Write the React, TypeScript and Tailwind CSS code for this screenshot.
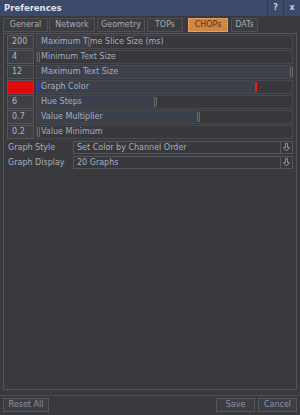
const tabs = [
  { name: 'General', w: 'w-[45px]' },
  { name: 'Network', w: 'ml-[1px] w-[46px]' },
  { name: 'Geometry', w: 'ml-[2px] w-[48px]' },
  { name: 'TOPs', w: 'ml-[2px] w-[36px]' },
  { name: 'CHOPs', w: 'ml-[5px] w-[40px]' },
  { name: 'DATs', w: 'ml-[3px] w-[27px]' },
];

type Row = { value: string; label: string; fill: number; color?: boolean };

// fill = slider thumb position in px from the left of the field
const rows: Row[] = [
  { value: '200', label: 'Maximum Time Slice Size (ms)', fill: 52 },
  { value: '4', label: 'Minimum Text Size', fill: 0 },
  { value: '12', label: 'Maximum Text Size', fill: 254 },
  { value: '', label: 'Graph Color', fill: 218, color: true },
  { value: '6', label: 'Hue Steps', fill: 118 },
  { value: '0.7', label: 'Value Multiplier', fill: 161 },
  { value: '0.2', label: 'Value Minimum', fill: 0 },
];

const menus = [
  { label: 'Graph Style', value: 'Set Color by Channel Order' },
  { label: 'Graph Display', value: '20 Graphs' },
];

function SliderRow({ row }: { row: Row }) {
  return (
    <div className="flex h-[14px] items-stretch gap-[2px]">
      {row.color ? (
        <div className="w-[27px] border border-[#55565b] bg-[#e00a0a]" />
      ) : (
        <div className="w-[27px] border border-[#55565b] bg-[#3f4045] pl-[4px] leading-[12px] text-[#b3b7c0]">
          {row.value}
        </div>
      )}
      <div className="relative flex-1 border border-[#48494d] bg-[#39393d]">
        <div
          className="absolute left-0 top-0 bottom-0 bg-[#3b414c]"
          style={{ width: row.fill }}
        />
        <div className="relative pl-[4px] leading-[12px] text-[#a7adbb]">{row.label}</div>
        {row.color ? (
          <>
            <div className="absolute left-0 top-[1px] h-[10px] w-[2px] bg-[#2438d8]" />
            <div
              className="absolute top-[1px] h-[10px] w-[2px] bg-[#ee1c1c]"
              style={{ left: row.fill }}
            />
          </>
        ) : (
          <div
            className="absolute top-[1px] h-[10px] w-[3px] rounded-[1px] border border-[#6b6c72] bg-[#3a3b40]"
            style={{ left: Math.max(0, row.fill - 1) }}
          />
        )}
      </div>
    </div>
  );
}

export default function App() {
  return (
    <div
      className="flex h-[415px] w-[300px] flex-col bg-[#3a3a3e] text-[8px]"
      style={{ fontFamily: '"DejaVu Sans", Verdana, sans-serif' }}
    >
      <div className="flex h-[16px] items-stretch justify-between bg-[#3d4969]">
        <div className="pl-[4px] text-[8.5px] font-bold leading-[16px] text-[#dde2ee]">Preferences</div>
        <div className="flex">
          <div className="w-[16px] border-l border-[#2f3a55] text-center font-bold leading-[16px] text-[#c9cfdc]">?</div>
          <div className="w-[17px] border-l border-[#2f3a55] text-center font-bold leading-[16px] text-[#c9cfdc]">x</div>
        </div>
      </div>

      <div className="flex px-[3px] pt-[2px]">
        {tabs.map((t) => (
          <div
            key={t.name}
            className={
              t.name === 'CHOPs'
                ? `${t.w} h-[14px] border border-[#e3a060] bg-[#cf8743] text-center leading-[12px] text-[#6a2d0c]`
                : `${t.w} h-[14px] border border-[#505156] bg-[#3c3d41] text-center leading-[12px] text-[#a6acb8]`
            }
          >
            {t.name}
          </div>
        ))}
      </div>

      <div className="mx-[3px] mt-[1px] flex flex-1 flex-col border border-[#54555a] px-[3px] pt-[1px]">
        <div className="flex flex-col gap-[1px]">
          {rows.map((r) => (
            <SliderRow key={r.label} row={r} />
          ))}
        </div>
        <div className="mt-[2px] flex flex-col gap-[2px]">
          {menus.map((m) => (
            <div key={m.label} className="flex h-[13px] items-stretch">
              <div className="w-[66px] pl-[1px] leading-[13px] text-[#a7adbb]">{m.label}</div>
              <div className="flex flex-1 border border-[#55565b] bg-[#38393e]">
                <div className="flex-1 pl-[3px] leading-[11px] text-[#a9afbc]">{m.value}</div>
                <div className="flex w-[12px] items-center justify-center border-l border-[#55565b]">
                  <svg width="7" height="9" viewBox="0 0 7 9" fill="none" stroke="#8a909c" strokeWidth="1">
                    <path d="M2.5 0.5 V4.5 H0.5 L3.5 8 L6.5 4.5 H4.5 V0.5 Z" />
                  </svg>
                </div>
              </div>
            </div>
          ))}
        </div>
      </div>

      <div className="mt-[5px] flex items-center justify-between border-t border-[#4f5055] px-[3px] pb-[3px] pt-[2px]">
        <div className="h-[14px] w-[46px] border border-[#56575c] bg-[#3d3e43] text-center leading-[12px] text-[#8b93a5]">Reset All</div>
        <div className="flex gap-[3px]">
          <div className="h-[14px] w-[39px] border border-[#56575c] bg-[#3d3e43] text-center leading-[12px] text-[#8b93a5]">Save</div>
          <div className="h-[14px] w-[39px] border border-[#56575c] bg-[#3d3e43] text-center leading-[12px] text-[#8b93a5]">Cancel</div>
        </div>
      </div>
    </div>
  );
}
